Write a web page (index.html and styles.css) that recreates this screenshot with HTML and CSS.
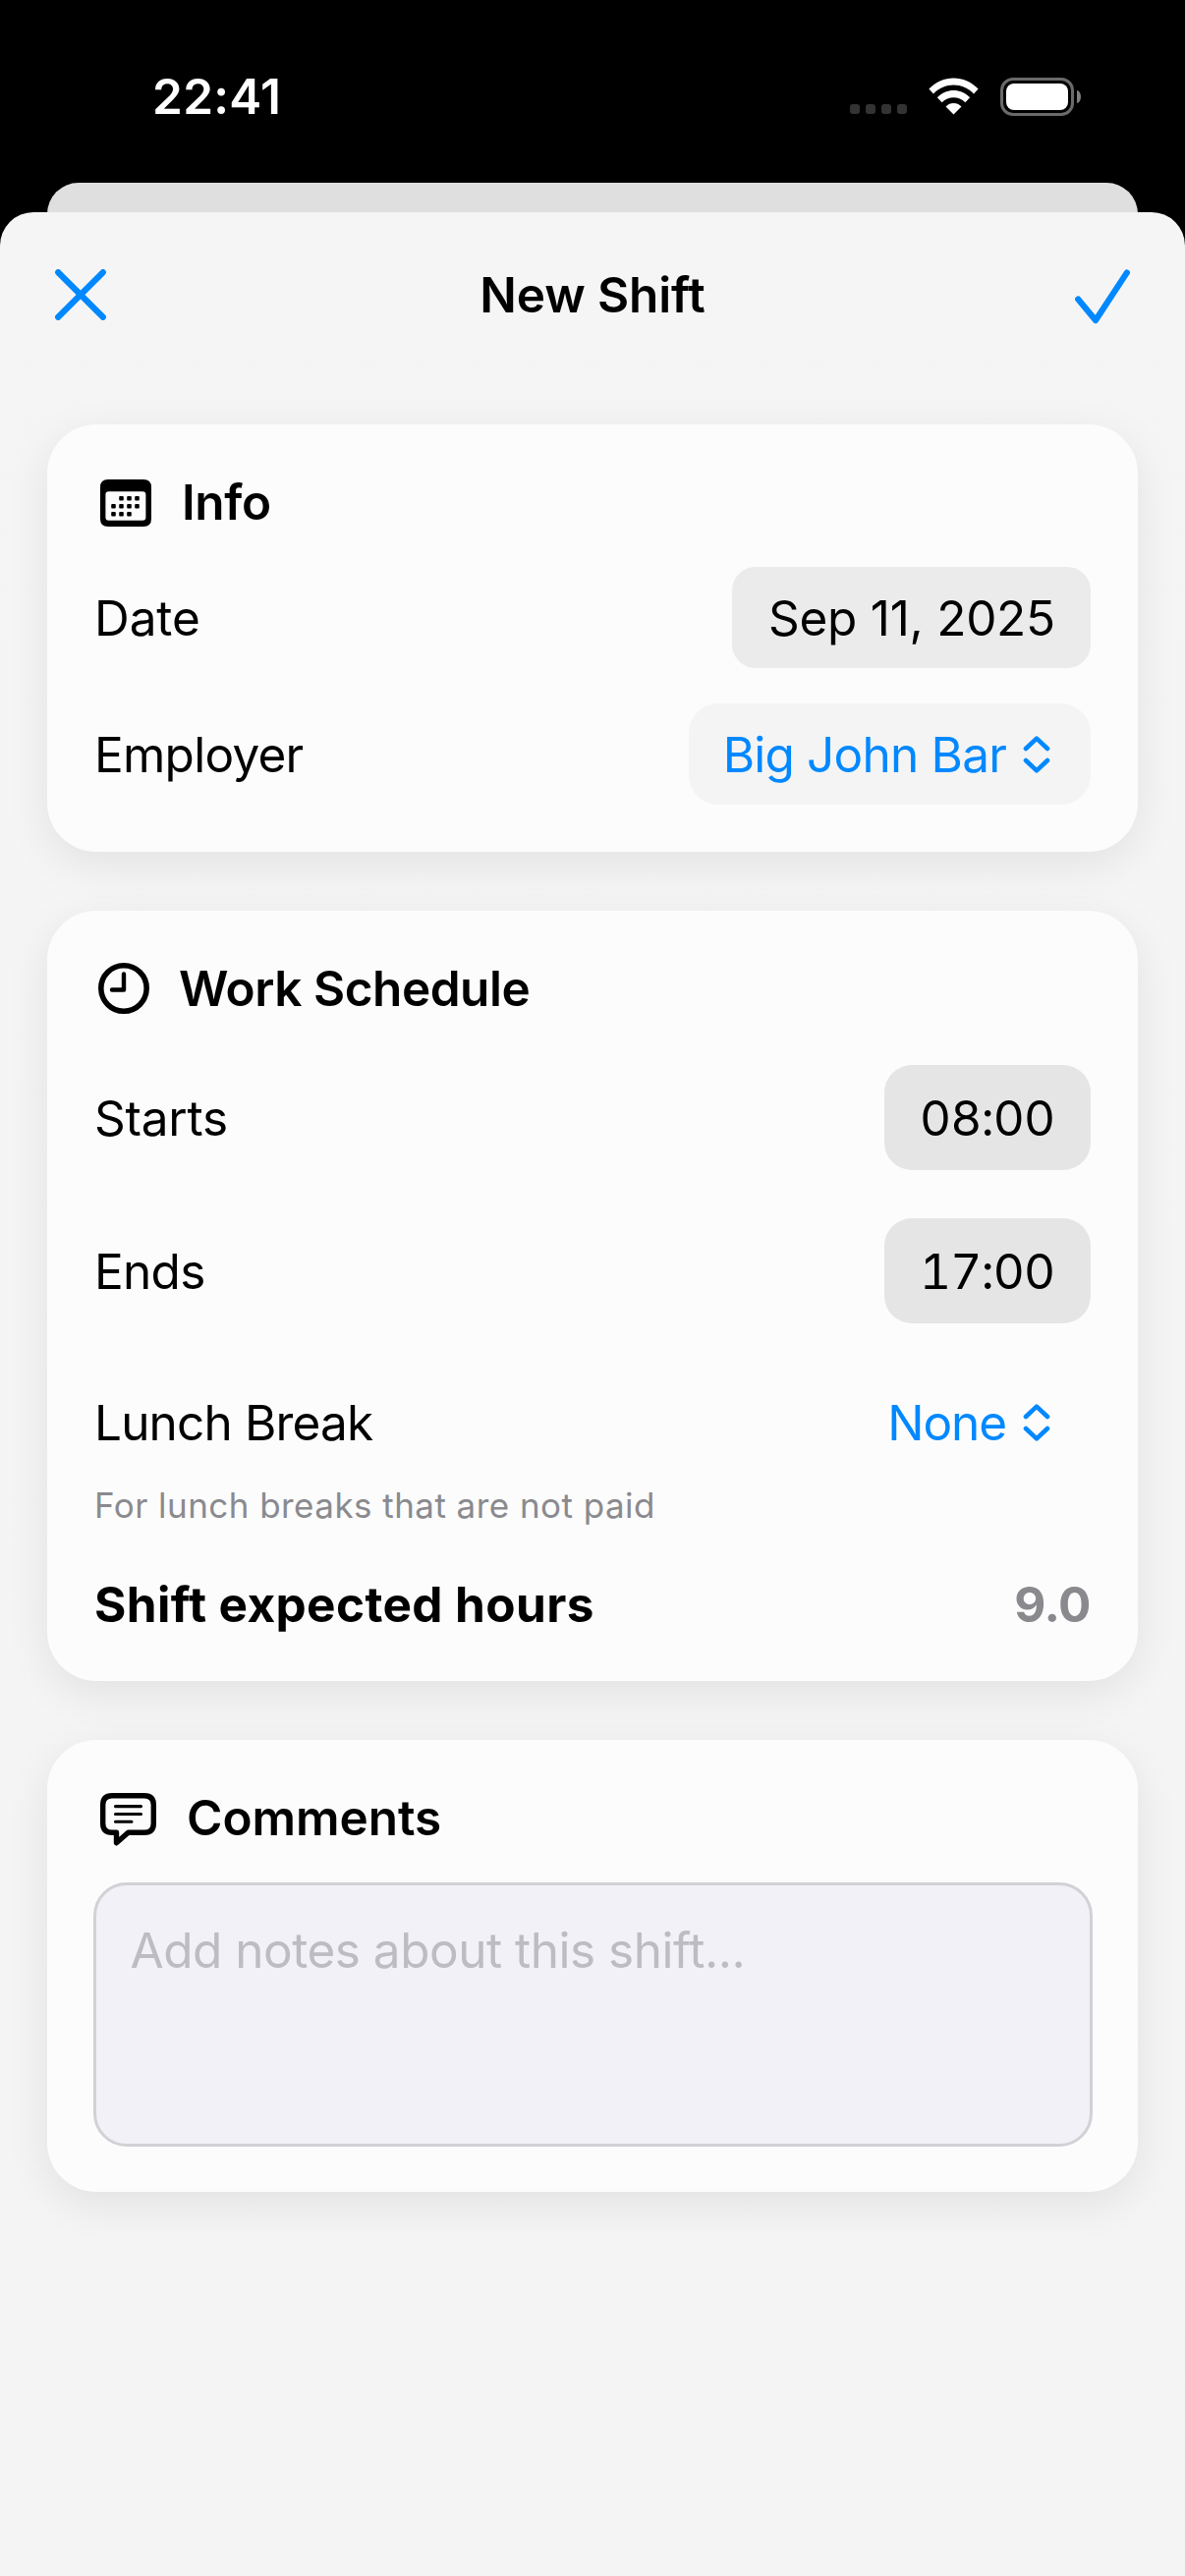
FILE: index.html
```html
<!DOCTYPE html>
<html lang="en">
<head>
<meta charset="utf-8">
<title>New Shift</title>
<link rel="stylesheet" href="styles.css">
</head>
<body>
<div class="status">
  <span class="t time">22:41</span>
  <div class="status-icons">
    <div class="cell"><i></i><i></i><i></i><i></i></div>
    <svg class="wifi" width="51" height="38" viewBox="0 0 51 38" fill="#fff">
      <path d="M0.4 11.6 C14.5 -3.2 36.5 -3.2 50.6 11.6 L46 16.4 C34.5 4.6 16.5 4.6 5 16.4 Z"/>
      <path d="M8.9 20.3 C18.5 10.6 32.5 10.6 42.1 20.3 L37.4 25.2 C30.7 18.6 20.3 18.6 13.6 25.2 Z"/>
      <path d="M17.5 29.4 C22 24.8 29 24.8 33.5 29.4 L25.5 37.6 Z"/>
    </svg>
    <div class="battery"><div class="body"><b></b></div><div class="nub"></div></div>
  </div>
</div>
<div class="back-sheet"></div>
<main class="sheet">
  <header class="nav">
    <svg width="52" height="52" viewBox="0 0 52 52"><path d="M3.2 3.2 L48.8 48.8 M48.8 3.2 L3.2 48.8"/></svg>
    <h1><span class="t title">New Shift</span></h1>
    <svg class="check" width="56" height="56" viewBox="0 0 56 56"><path d="M3.2 30.6 L21 52 L52.8 3.6"/></svg>
  </header>

  <div class="cards">
  <section class="card">
    <h2>
      <svg class="ic-cal" width="52" height="48" viewBox="0 0 52 48"><path fill-rule="evenodd" d="M8 0 H44 Q52 0 52 8 V40 Q52 48 44 48 H8 Q0 48 0 40 V8 Q0 0 8 0 Z M8.5 12.3 Q5.4 12.3 5.4 15.4 V38.5 Q5.4 41.8 8.5 41.8 H43 Q46.4 41.8 46.4 38.5 V15.4 Q46.4 12.3 43 12.3 Z"/><rect x="19.2" y="17" width="4.6" height="4.4" rx="1"/><rect x="27.2" y="17" width="4.6" height="4.4" rx="1"/><rect x="35.2" y="17" width="4.6" height="4.4" rx="1"/><rect x="11.2" y="25" width="4.6" height="4.4" rx="1"/><rect x="19.2" y="25" width="4.6" height="4.4" rx="1"/><rect x="27.2" y="25" width="4.6" height="4.4" rx="1"/><rect x="35.2" y="25" width="4.6" height="4.4" rx="1"/><rect x="11.2" y="33" width="4.6" height="4.4" rx="1"/><rect x="19.2" y="33" width="4.6" height="4.4" rx="1"/><rect x="27.2" y="33" width="4.6" height="4.4" rx="1"/></svg>
      <span class="t info">Info</span>
    </h2>
    <div class="row date"><span class="t l-date">Date</span><span class="pill pill-date"><span class="t">Sep 11, 2025</span></span></div>
    <div class="row employer"><span class="t l-emp">Employer</span><span class="pill pill-menu filled"><span class="t v-emp">Big John Bar</span><svg class="chev" width="28" height="38" viewBox="0 0 28 38"><path d="M3 13 L14 2.6 L25 13 M3 25 L14 35.4 L25 25"/></svg></span></div>
  </section>

  <section class="card schedule">
    <h2>
      <svg class="ic-clock" width="52" height="52" viewBox="0 0 52 52"><circle cx="26" cy="26" r="23.2"/><path d="M26 11.5 V27.5 H14"/></svg>
      <span class="t work">Work Schedule</span>
    </h2>
    <div class="row starts"><span class="t l-starts">Starts</span><span class="pill pill-time"><span class="t">08:00</span></span></div>
    <div class="row ends"><span class="t l-ends">Ends</span><span class="pill pill-time"><span class="t">17:00</span></span></div>
    <div class="row lunch"><span class="t l-lunch">Lunch Break</span><span class="pill pill-menu"><span class="t v-none">None</span><svg class="chev" width="28" height="38" viewBox="0 0 28 38"><path d="M3 13 L14 2.6 L25 13 M3 25 L14 35.4 L25 25"/></svg></span></div>
    <p class="hint">For lunch breaks that are not paid</p>
    <div class="row total"><span class="t l-total">Shift expected hours</span><span class="t v-total">9.0</span></div>
  </section>

  <section class="card comments-card">
    <h2>
      <svg class="ic-msg" width="57" height="54" viewBox="0 0 57 54"><path class="bubble" d="M12 2.7 H45 Q54.3 2.7 54.3 12 V31 Q54.3 40.3 45 40.3 H28.5 L16.5 50.8 V40.3 H12 Q2.7 40.3 2.7 31 V12 Q2.7 2.7 12 2.7 Z"/><path class="lines" d="M15.5 13.6 H41.5 M15.5 21.5 H41.5 M15.5 29.2 H32"/></svg>
      <span class="t comments">Comments</span>
    </h2>
    <div class="notes"><span class="t">Add notes about this shift...</span></div>
  </section>
  </div>
</main>
</body>
</html>
```
FILE: styles.css
```css
* { box-sizing: border-box; margin: 0; padding: 0; }

body {
  width: 1206px;
  height: 2622px;
  background: #000;
  overflow: hidden;
  font-family: Inter, "Liberation Sans", sans-serif;
  font-size: 49.5px;
  color: #000;
  display: flex;
  flex-direction: column;
}

.t { white-space: nowrap; line-height: 62px; display: block; }
svg { display: block; flex: none; }

/* Status bar */
.status {
  height: 186px;
  padding: 67px 106px 57px 155px;
  display: flex;
  justify-content: space-between;
  align-items: center;
  color: #fff;
  flex: none;
}
.time { font-weight: 600; letter-spacing: 0.3px; }
.status-icons { display: flex; height: 39px; align-items: center; }
.cell { display: flex; gap: 6px; align-self: flex-end; padding-bottom: 2px; margin-right: 22px; }
.cell i { width: 10px; height: 10px; border-radius: 3px; background: #333; }
.wifi { margin-right: 22px; }
.battery { display: flex; align-items: center; gap: 3px; }
.body { width: 75px; height: 39px; border: 3px solid #6a6a6a; border-radius: 13px; padding: 3px; }
.body b { display: block; height: 27px; border-radius: 8px; background: #fff; }
.nub { width: 4px; height: 13px; background: #808080; border-radius: 0 4px 4px 0 / 0 6.5px 6.5px 0; }

/* Sheets */
.back-sheet { height: 60px; margin: 0 48px -30px; background: #dfdfdf; border-radius: 32px 32px 0 0; flex: none; }
.sheet {
  flex: 1;
  background: linear-gradient(#f5f5f5, #f4f4f4);
  border-radius: 34px 34px 0 0;
  padding: 0 48px;
  position: relative;
}
.nav {
  height: 216px;
  padding: 12px 8px 60px;
  display: grid;
  grid-template-columns: 56px 1fr 56px;
  align-items: center;
}
.nav svg { fill: none; stroke: #0088ff; stroke-width: 6.2; stroke-linecap: round; stroke-linejoin: round; }
.nav .check { margin-top: 3px; }
.nav h1, .card h2 { font-size: inherit; font-weight: 600; }
.nav h1 { display: flex; justify-content: center; }
.title { letter-spacing: -0.12px; }

/* Cards */
.cards { display: flex; flex-direction: column; gap: 60px; }
.card { background: #fcfcfc; border-radius: 50px; padding: 48px; box-shadow: 0 12px 45px rgba(0, 0, 0, 0.08); }
.card h2 { height: 62px; display: flex; align-items: center; }
.schedule { padding-bottom: 47px; }
.comments-card { padding-bottom: 46px; }

.ic-cal { margin: 1px 31px 0 6px; }
.ic-clock { margin: 0 30px 0 4px; fill: none; stroke: #000; stroke-width: 5.6; }
.ic-clock path { stroke-width: 4.4; stroke-linecap: round; stroke-linejoin: round; }
.ic-msg { margin: 3px 31px 0 6px; fill: none; stroke: #000; stroke-linecap: round; stroke-linejoin: round; }
.bubble { stroke-width: 5.4; }
.lines { stroke-width: 3.1; }

.info { letter-spacing: -0.35px; }
.work { letter-spacing: -0.46px; }
.comments { letter-spacing: -0.05px; }

.row { display: flex; justify-content: space-between; align-items: center; }
.date { margin-top: 35px; }
.employer { margin-top: 36px; }
.starts { margin-top: 47px; }
.ends, .lunch { margin-top: 49px; }

.l-date { letter-spacing: -0.08px; }
.l-emp { letter-spacing: -0.75px; }
.l-starts { letter-spacing: -0.22px; }
.l-ends { letter-spacing: -0.7px; }
.l-lunch { letter-spacing: -0.83px; }

.pill { display: flex; align-items: center; height: 103px; border-radius: 28px; }
.pill-date { width: 365px; padding-left: 37px; background: #ebebeb; border-radius: 24px; letter-spacing: -0.26px; }
.pill-menu { padding: 0 41px 0 35px; gap: 17px; color: #0088ff; }
.filled { background: #f4f4f4; border-radius: 30px; }
.pill-time {
  width: 210px;
  height: 107px;
  padding-left: 36px;
  background: #e5e5e5;
  letter-spacing: -0.9px;
  font-variant-numeric: tabular-nums;
}
.v-emp { letter-spacing: -0.79px; }
.v-none { letter-spacing: -1.07px; }
.chev { fill: none; stroke: #0088ff; stroke-width: 4.6; stroke-linecap: round; stroke-linejoin: round; }

.hint { margin-top: 12px; height: 43px; line-height: 43px; font-size: 35px; color: #8a8a8e; letter-spacing: 0.45px; }
.total { margin-top: 48px; font-weight: 700; }
.l-total { letter-spacing: 0.38px; }
.v-total { color: #8a8a8e; letter-spacing: -0.5px; }

.notes {
  height: 269px;
  margin: 35px -1.5px 0;
  padding: 35px;
  border: 3px solid #d1d1d6;
  border-radius: 34px;
  background: #f2f1f7;
  color: #bdbdc1;
  letter-spacing: -0.49px;
}
```
